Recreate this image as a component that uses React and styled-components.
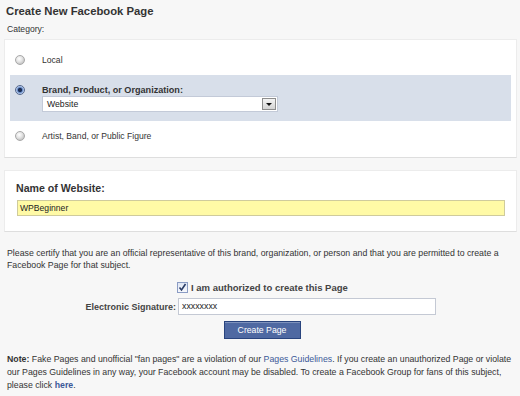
import React from "react";
import styled, { createGlobalStyle } from "styled-components";

const Global = createGlobalStyle`
  html, body { margin: 0; padding: 0; background: #f7f7f7; }
  body { font-family: "Liberation Sans", Arial, sans-serif; color: #333; }
  * { box-sizing: border-box; }
`;

const Page = styled.div`
  width: 520px;
  height: 396px;
  padding: 4px 3px 0 4px;
  background: #f7f7f7;
  overflow: hidden;
`;

const Title = styled.h1`
  margin: 0;
  padding-left: 2px;
  font-size: 11.3px;
  line-height: 14px;
  font-weight: bold;
  color: #333;
`;

const SmallLabel = styled.div`
  margin-top: 5px;
  padding-left: 3px;
  font-size: 8.6px;
  line-height: 12px;
`;

const Panel = styled.div`
  background: #fff;
  border: 1px solid #ececec;
  border-bottom: 1px solid #dedede;
  margin-top: ${(p) => p.$mt || 0}px;
  padding: ${(p) => p.$pad};
`;

const Option = styled.div`
  display: grid;
  grid-template-columns: 10px 1fr;
  column-gap: 17px;
  align-items: ${(p) => (p.$active ? "start" : "center")};
  padding: ${(p) => (p.$active ? "9px 0 9px 5px" : "0 0 0 5px")};
  height: ${(p) => (p.$active ? "46px" : "26px")};
  margin-top: ${(p) => p.$mt || 0}px;
  background: ${(p) => (p.$active ? "#d8dfea" : "transparent")};
`;

const Radio = styled.span`
  display: block;
  width: 10px;
  height: 10px;
  border-radius: 50%;
  border: 1px solid ${(p) => (p.$checked ? "#56698f" : "#a8a8a8")};
  background: ${(p) =>
    p.$checked
      ? "radial-gradient(circle at 50% 50%, #1d2f55 0 1.8px, #5f85c6 2.4px, #c6d6ef 4px)"
      : "radial-gradient(circle at 40% 35%, #ffffff 0, #e4e4e4 3px, #c9c9c9 5px)"};
  margin-top: ${(p) => (p.$checked ? "1px" : "0")};
`;

const OptText = styled.div`
  line-height: 12px;
  font-weight: ${(p) => (p.$bold ? "bold" : "normal")};
  font-size: ${(p) => (p.$bold ? "9.1px" : "8.6px")};
  color: #333;
`;

const Select = styled.div`
  display: flex;
  align-items: center;
  justify-content: space-between;
  width: 236px;
  height: 16px;
  background: #fff;
  border: 1px solid #c3cad8;
  padding: 0 1px 0 4px;
  font-size: 8.7px;
  color: #222;
`;

const Arrow = styled.span`
  display: flex;
  align-items: center;
  justify-content: center;
  width: 14px;
  height: 12px;
  border: 1px solid #8d8d8d;
  background: linear-gradient(#f4f4f4, #d4d4d4);
  &::after {
    content: "";
    border-left: 3px solid transparent;
    border-right: 3px solid transparent;
    border-top: 3px solid #111;
    margin-top: 1px;
  }
`;

const FieldTitle = styled.div`
  font-size: 10.6px;
  line-height: 14px;
  font-weight: bold;
  color: #333;
`;

const YellowInput = styled.div`
  margin: 5px 0 0 1px;
  height: 16px;
  background: #fffaa6;
  border: 1px solid #cfcb9c;
  padding-left: 2px;
  font-size: 8.6px;
  line-height: 14px;
  color: #222;
`;

const Para = styled.p`
  margin: ${(p) => p.$m || "0"};
  padding-left: 3px;
  font-size: 8.75px;
  line-height: ${(p) => p.$lh || 12}px;
  color: #333;
`;

const Form = styled.div`
  display: grid;
  grid-template-columns: 170px 1fr;
  row-gap: 4px;
  margin-top: 9px;
  padding-left: 3px;
  align-items: center;
`;

const FormLabel = styled.div`
  text-align: right;
  font-size: 9px;
  font-weight: bold;
  color: #444;
  padding-right: 1px;
`;

const CheckRow = styled.div`
  display: flex;
  align-items: center;
  gap: 3px;
  height: 14px;
`;

const Check = styled.span`
  display: flex;
  align-items: center;
  justify-content: center;
  width: 11px;
  height: 11px;
  border: 1px solid #8b9cc4;
  background: linear-gradient(#dfe6f4, #f6f8fc);
`;

const CheckLabel = styled.span`
  font-size: 9.5px;
  font-weight: bold;
  color: #444;
`;

const TextInput = styled.div`
  width: 258px;
  height: 17px;
  margin-left: 1px;
  background: #fff;
  border: 1px solid #c4c9d4;
  padding-left: 3px;
  font-size: 8.8px;
  line-height: 15px;
  color: #222;
`;

const ButtonRow = styled.div`
  display: flex;
  justify-content: center;
  margin-top: 6px;
  padding-left: 3px;
`;

const Button = styled.button`
  width: 77px;
  height: 18px;
  padding: 0;
  background: #4f69a2;
  border: 1px solid #29447e;
  box-shadow: inset 0 1px 0 #7f93bd;
  color: #fff;
  font-family: "Liberation Sans", Arial, sans-serif;
  font-size: 8.7px;
`;

const Link = styled.a`
  color: #3b5998;
  text-decoration: none;
  font-weight: ${(p) => (p.$bold ? "bold" : "normal")};
`;

export default function App() {
  return (
    <>
      <Global />
      <Page>
        <Title>Create New Facebook Page</Title>
        <SmallLabel>Category:</SmallLabel>
        <Panel $mt={4} $pad="7px 5px 8px 5px">
          <Option>
            <Radio />
            <OptText>Local</OptText>
          </Option>
          <Option $active $mt={2}>
            <Radio $checked />
            <div>
              <OptText $bold>Brand, Product, or Organization:</OptText>
              <Select>
                Website
                <Arrow />
              </Select>
            </div>
          </Option>
          <Option $mt={2}>
            <Radio />
            <OptText>Artist, Band, or Public Figure</OptText>
          </Option>
        </Panel>
        <Panel $mt={12} $pad="10px 11px 15px 11px">
          <FieldTitle>Name of Website:</FieldTitle>
          <YellowInput>WPBeginner</YellowInput>
        </Panel>
        <Para $m="15px 0 0 0">
          Please certify that you are an official representative of this brand,
          organization, or person and that you are permitted to create a
          Facebook Page for that subject.
        </Para>
        <Form>
          <div />
          <CheckRow>
            <Check>
              <svg width="9" height="9" viewBox="0 0 9 9">
                <path d="M1.5 4.5 L3.5 7 L7.5 1" fill="none" stroke="#2a3c66" strokeWidth="1.6" />
              </svg>
            </Check>
            <CheckLabel>I am authorized to create this Page</CheckLabel>
          </CheckRow>
          <FormLabel>Electronic Signature:</FormLabel>
          <TextInput>xxxxxxxx</TextInput>
        </Form>
        <ButtonRow>
          <Button>Create Page</Button>
        </ButtonRow>
        <Para $m="14px 0 0 0" $lh={13}>
          <b>Note:</b> Fake Pages and unofficial "fan pages" are a violation of our{" "}
          <Link>Pages Guidelines</Link>. If you create an unauthorized Page or violate
          our Pages Guidelines in any way, your Facebook account may be disabled. To
          create a Facebook Group for fans of this subject, please click{" "}
          <Link $bold>here</Link>.
        </Para>
      </Page>
    </>
  );
}
